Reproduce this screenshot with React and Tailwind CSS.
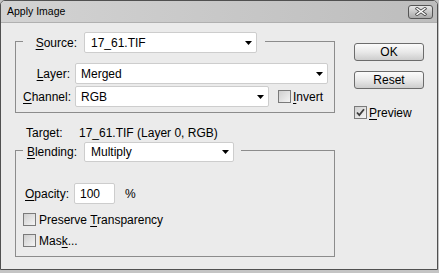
import React from 'react';

// Small dropdown triangle used in every combobox
function Arrow() {
  return (
    <svg width="7" height="4" viewBox="0 0 7 4" className="shrink-0">
      <path d="M0 0h7L3.5 4z" fill="#000" />
    </svg>
  );
}

function Combo({ value, className = '', pl = 'pl-[5px]' }) {
  return (
    <div
      className={`flex items-center justify-between bg-white border border-[#cdcdcd] rounded-[2px] pr-[4px] ${pl} ${className}`}
    >
      <span className="leading-none">{value}</span>
      <Arrow />
    </div>
  );
}

function Check({ checked = false }) {
  return (
    <div className="w-[13px] h-[13px] shrink-0 border border-[#7a7a7a] bg-gradient-to-br from-[#cfcfcf] to-[#f4f4f4] flex items-center justify-center">
      {checked && (
        <svg width="9" height="9" viewBox="0 0 9 9">
          <path d="M1 4.5l2.3 2.5L8 1.2" fill="none" stroke="#3c3c3c" strokeWidth="1.8" />
        </svg>
      )}
    </div>
  );
}

function Button({ children, className = '' }) {
  return (
    <div
      className={`h-[18px] w-[70px] flex items-center justify-center rounded-[3px] border border-[#6c6c6c] bg-gradient-to-b from-[#fbfbfb] via-[#e9e9e9] to-[#cdcdcd] ${className}`}
    >
      {children}
    </div>
  );
}

export default function App() {
  return (
    <div className="w-[439px] h-[273px] bg-[#c4c4c4]">
      <div className="w-[438px] h-[270px] flex flex-col bg-[#ebebeb] border border-[#505050] rounded-t-[5px] overflow-hidden font-['Liberation_Sans',Arial,sans-serif] text-[12px] text-black">
        {/* title bar */}
        <div className="h-[22px] shrink-0 flex items-center justify-between pl-[6px] pr-[4px] bg-gradient-to-r from-[#d3d3d3] to-[#bdbdbd] border-b border-[#b0b0b0]">
          <span className="text-[10.5px] leading-none">Apply Image</span>
          <div className="w-[25px] h-[14px] rounded-[3px] border border-[#555] bg-gradient-to-b from-[#e6e6e6] to-[#a9a9a9] flex items-center justify-center">
            <svg width="12" height="9" viewBox="0 0 12 9">
              <path d="M2 1.5l8 6M10 1.5l-8 6" stroke="#4a4a4a" strokeWidth="3" strokeLinecap="square" />
              <path d="M2 1.5l8 6M10 1.5l-8 6" stroke="#fff" strokeWidth="1.4" strokeLinecap="square" />
            </svg>
          </div>
        </div>

        {/* body */}
        <div className="flex-1 flex pl-[14px]">
          {/* left column */}
          <div className="w-[320px] flex flex-col">
            {/* source group */}
            <div className="mt-[18px] border border-[#8c8c8c] pb-[5px]">
              <div className="-mt-[10px] h-[21px] flex">
                <div className="ml-[7px] flex items-center bg-[#ebebeb] pr-[8px]">
                  <span className="w-[54px] text-right">
                    <u className="underline-offset-2">S</u>ource:
                  </span>
                  <Combo value="17_61.TIF" className="ml-[7px] w-[173px] h-[21px]" pl="pl-[6px]" />
                </div>
              </div>
              <div className="mt-[10px] h-[21px] flex items-center ml-[7px]">
                <span className="w-[47px] text-right">
                  <u className="underline-offset-2">L</u>ayer:
                </span>
                <Combo value="Merged" className="ml-[5px] w-[253px] h-[21px]" />
              </div>
              <div className="mt-[2px] h-[21px] flex items-center ml-[7px]">
                <span className="w-[47px] text-right">
                  <u className="underline-offset-2">C</u>hannel:
                </span>
                <Combo value="RGB" className="ml-[5px] w-[194px] h-[21px]" />
                <div className="ml-[9px] flex items-center gap-[2px]">
                  <Check />
                  <span>
                    <u className="underline-offset-2">I</u>nvert
                  </span>
                </div>
              </div>
            </div>

            {/* target */}
            <div className="mt-[13px] h-[14px] flex items-center pl-[11px]">
              <span className="w-[53px]">Target:</span>
              <span>17_61.TIF (Layer 0, RGB)</span>
            </div>

            {/* blending group */}
            <div className="mt-[10px] border border-[#8c8c8c] pb-[9px]">
              <div className="-mt-[9px] h-[20px] flex">
                <div className="ml-[7px] flex items-center bg-[#ebebeb] pr-[7px]">
                  <span className="w-[54px] text-right">
                    <u className="underline-offset-2">B</u>lending:
                  </span>
                  <Combo value="Multiply" className="ml-[7px] w-[150px] h-[20px]" pl="pl-[6px]" />
                </div>
              </div>
              <div className="mt-[21px] h-[21px] flex items-center ml-[9px]">
                <span className="w-[49px]">
                  <u className="underline-offset-2">O</u>pacity:
                </span>
                <div className="w-[41px] h-[21px] bg-white border border-[#cdcdcd] rounded-[2px] flex items-center pl-[5px]">
                  100
                </div>
                <span className="ml-[10px]">%</span>
              </div>
              <div className="mt-[9px] h-[13px] flex items-center gap-[3px] ml-[7px]">
                <Check />
                <span>
                  Preserve <u className="underline-offset-2">T</u>ransparency
                </span>
              </div>
              <div className="mt-[8px] h-[13px] flex items-center gap-[3px] ml-[7px]">
                <Check />
                <span>
                  Mas<u className="underline-offset-2">k</u>...
                </span>
              </div>
            </div>
          </div>

          {/* right column */}
          <div className="ml-[19px] w-[70px] flex flex-col">
            <Button className="mt-[20px]">OK</Button>
            <Button className="mt-[10px]">Reset</Button>
            <div className="mt-[17px] h-[13px] flex items-center gap-[2px]">
              <Check checked />
              <span>
                <u className="underline-offset-2">P</u>review
              </span>
            </div>
          </div>
        </div>
      </div>
    </div>
  );
}
